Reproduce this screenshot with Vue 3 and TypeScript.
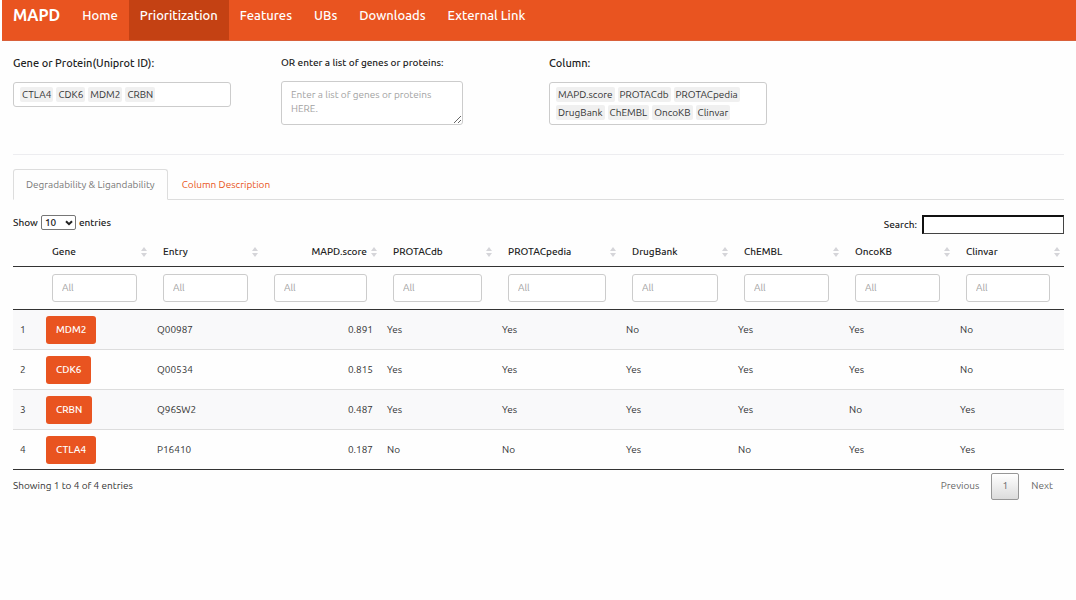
<script setup lang="ts">
import { computed, ref } from 'vue'

interface Column {
  key: string
  label: string
  width: number
  numeric?: boolean
}

type Row = Record<string, string>

const navItems: string[] = ['Home', 'Prioritization', 'Features', 'UBs', 'Downloads', 'External Link']
const activeNav = ref('Prioritization')

const selectedGenes = ref<string[]>(['CTLA4', 'CDK6', 'MDM2', 'CRBN'])
const selectedColumns = ref<string[]>([
  'MAPD.score', 'PROTACdb', 'PROTACpedia', 'DrugBank', 'ChEMBL', 'OncoKB', 'Clinvar',
])

const tabs: string[] = ['Degradability & Ligandability', 'Column Description']
const activeTab = ref(tabs[0])

const columns: Column[] = [
  { key: 'gene', label: 'Gene', width: 111 },
  { key: 'entry', label: 'Entry', width: 111 },
  { key: 'score', label: 'MAPD.score', width: 119, numeric: true },
  { key: 'protacdb', label: 'PROTACdb', width: 115 },
  { key: 'protacpedia', label: 'PROTACpedia', width: 124 },
  { key: 'drugbank', label: 'DrugBank', width: 112 },
  { key: 'chembl', label: 'ChEMBL', width: 111 },
  { key: 'oncokb', label: 'OncoKB', width: 111 },
  { key: 'clinvar', label: 'Clinvar', width: 110 },
]

const rows: Row[] = [
  ['MDM2', 'Q00987', '0.891', 'Yes', 'Yes', 'No', 'Yes', 'Yes', 'No'],
  ['CDK6', 'Q00534', '0.815', 'Yes', 'Yes', 'Yes', 'Yes', 'Yes', 'No'],
  ['CRBN', 'Q96SW2', '0.487', 'Yes', 'Yes', 'Yes', 'Yes', 'No', 'Yes'],
  ['CTLA4', 'P16410', '0.187', 'No', 'No', 'Yes', 'No', 'Yes', 'Yes'],
].map((values) => Object.fromEntries(columns.map((c, i) => [c.key, values[i]])))

const geneList = ref('')
const pageSize = ref('10')
const search = ref('')
const filters = ref<Record<string, string>>({})
const sortKey = ref('')
const sortAscending = ref(true)

function sortBy(key: string) {
  sortAscending.value = sortKey.value === key ? !sortAscending.value : true
  sortKey.value = key
}

const visibleRows = computed<Row[]>(() => {
  const term = search.value.toLowerCase()
  const found = rows.filter(
    (row) =>
      Object.values(row).some((v) => v.toLowerCase().includes(term)) &&
      columns.every((c) => row[c.key].toLowerCase().includes((filters.value[c.key] ?? '').toLowerCase())),
  )
  if (sortKey.value) {
    const direction = sortAscending.value ? 1 : -1
    found.sort((a, b) => a[sortKey.value].localeCompare(b[sortKey.value]) * direction)
  }
  return found
})
</script>

<template>
  <div class="page">
    <nav class="navbar">
      <a class="brand" href="#">MAPD</a>
      <a
        v-for="item in navItems"
        :key="item"
        href="#"
        class="nav-link"
        :class="{ active: item === activeNav }"
        @click.prevent="activeNav = item"
      >{{ item }}</a>
    </nav>

    <main class="content">
      <section class="controls">
        <div class="field">
          <label for="genes">Gene or Protein(Uniprot ID):</label>
          <div class="tokens">
            <span v-for="gene in selectedGenes" :key="gene" class="token">{{ gene }}</span>
            <input id="genes" class="token-input" type="text" />
          </div>
        </div>
        <div class="field list-field">
          <label for="gene-list">OR enter a list of genes or proteins:</label>
          <textarea id="gene-list" v-model="geneList" placeholder="Enter a list of genes or proteins HERE."></textarea>
        </div>
        <div class="field">
          <label for="columns">Column:</label>
          <div class="tokens">
            <span v-for="name in selectedColumns" :key="name" class="token">{{ name }}</span>
            <input id="columns" class="token-input" type="text" />
          </div>
        </div>
      </section>

      <hr class="divider" />

      <div class="tabs" role="tablist">
        <button
          v-for="tab in tabs"
          :key="tab"
          type="button"
          role="tab"
          class="tab"
          :class="{ active: tab === activeTab }"
          :aria-selected="tab === activeTab"
          @click="activeTab = tab"
        >{{ tab }}</button>
      </div>

      <div class="toolbar">
        <label class="length">
          Show
          <span class="select-wrap">
            <select v-model="pageSize">
              <option>10</option>
              <option>25</option>
              <option>50</option>
              <option>100</option>
            </select>
            <svg class="chevron" viewBox="0 0 8 6" aria-hidden="true"><path d="M1 1.2 4 4.2 7 1.2" /></svg>
          </span>
          entries
        </label>
        <label class="search">
          Search:
          <input v-model="search" type="search" />
        </label>
      </div>

      <table class="grid">
        <colgroup>
          <col class="index-col" />
          <col v-for="c in columns" :key="c.key" :style="{ width: c.width + 'px' }" />
        </colgroup>
        <thead>
          <tr class="heads">
            <th></th>
            <th v-for="c in columns" :key="c.key" scope="col">
              <button type="button" class="sort" :class="{ numeric: c.numeric }" @click="sortBy(c.key)">
                <span>{{ c.label }}</span>
                <svg viewBox="0 0 6 10" aria-hidden="true"><path d="M3 0 6 4H0zM0 6h6L3 10z" /></svg>
              </button>
            </th>
          </tr>
          <tr class="filters">
            <td></td>
            <td v-for="c in columns" :key="c.key">
              <input v-model="filters[c.key]" type="text" placeholder="All" :aria-label="c.label" />
            </td>
          </tr>
        </thead>
        <tbody>
          <tr v-for="(row, i) in visibleRows" :key="row.gene">
            <td>{{ i + 1 }}</td>
            <td v-for="c in columns" :key="c.key" :class="{ numeric: c.numeric }">
              <button v-if="c.key === 'gene'" type="button" class="gene">{{ row.gene }}</button>
              <template v-else>{{ row[c.key] }}</template>
            </td>
          </tr>
        </tbody>
      </table>

      <footer class="table-footer">
        <span>Showing 1 to {{ visibleRows.length }} of {{ rows.length }} entries</span>
        <div class="pager">
          <button type="button">Previous</button>
          <button type="button" class="current">1</button>
          <button type="button">Next</button>
        </div>
      </footer>
    </main>
  </div>
</template>

<style>
body {
  margin: 0;
  background: #fefefe;
}
</style>

<style scoped>
.page {
  font-family: Ubuntu, "Noto Sans", "Open Sans", sans-serif;
  font-size: 10px;
  line-height: 14px;
  color: #333;
}

.page *,
.page *::before {
  box-sizing: border-box;
}

button,
input,
select,
textarea {
  font: inherit;
  color: inherit;
  margin: 0;
}

button {
  background: none;
  border: 0;
  padding: 0;
  cursor: pointer;
}

.navbar {
  display: flex;
  height: 41px;
  margin-left: 2px;
  background: #e95420;
  border-bottom: 1px solid #d9603a;
}

.navbar a {
  color: #fff;
  text-decoration: none;
  line-height: 30px;
  font-size: 13px;
  font-weight: 500;
  padding: 0 11px;
}

.navbar .brand {
  font-size: 16px;
  font-weight: 700;
}

.navbar .nav-link.active {
  background: #c44113;
}

.content {
  padding: 15px 12px 0 13px;
}

.controls {
  display: grid;
  grid-template-columns: repeat(4, minmax(0, 1fr));
  gap: 21px;
  min-height: 70px;
}

.field {
  display: flex;
  flex-direction: column;
  align-items: flex-start;
  gap: 12px;
}

.field label {
  font-size: 11px;
  font-weight: 500;
  color: #222;
}

.list-field {
  gap: 11px;
}

.list-field label {
  font-size: 10px;
}

.tokens {
  display: flex;
  flex-wrap: wrap;
  gap: 3px;
  width: 100%;
  max-width: 218px;
  padding: 4px 6px;
  border: 1px solid #ccc;
  border-radius: 3px;
  background: #fff;
}

.token {
  padding: 0 2px;
  line-height: 15px;
  background: #f0f0f0;
  border-radius: 2px;
}

.token-input {
  flex: 1 1 4px;
  width: 4px;
  min-width: 0;
  height: 15px;
  padding: 0;
  border: 0;
  outline: 0;
  background: none;
}

textarea {
  width: 100%;
  max-width: 182px;
  height: 44px;
  padding: 6px 9px;
  border: 1px solid #ccc;
  border-radius: 3px;
  background: #fff;
  resize: both;
}

::placeholder {
  color: #a2a2a2;
  opacity: 1;
}

.divider {
  height: 1px;
  margin: 28px 0 14px;
  border: 0;
  background: #ededf0;
}

.tabs {
  display: flex;
  gap: 1px;
  border-bottom: 1px solid #ddd;
}

.tab {
  height: 31px;
  margin-bottom: -1px;
  padding: 0 12px;
  border: 1px solid transparent;
  border-radius: 3px 3px 0 0;
  color: #e95420;
}

.tab.active {
  color: #777;
  background: #fefefe;
  border-color: #ddd;
  border-bottom-color: #fefefe;
}

.toolbar {
  display: flex;
  justify-content: space-between;
  align-items: flex-start;
  padding-top: 15px;
  color: #222;
  font-weight: 500;
}

.length,
.search {
  display: flex;
  align-items: center;
  gap: 3px;
}

.search {
  gap: 5px;
}

.select-wrap {
  display: grid;
  align-items: center;
}

.select-wrap > * {
  grid-area: 1 / 1;
}

select {
  appearance: none;
  width: 35px;
  height: 15px;
  padding: 0 3px;
  line-height: 13px;
  border: 1px solid #767676;
  border-radius: 2px;
  background: #fff;
}

.chevron {
  justify-self: end;
  width: 8px;
  height: 6px;
  margin-right: 3px;
  fill: none;
  stroke: #222;
  stroke-width: 2;
  pointer-events: none;
}

.search input {
  width: 142px;
  height: 19px;
  padding: 0 3px;
  border: 1px solid #444;
  border-width: 2px 1px 1px 2px;
  border-color: #111 #444 #444 #111;
  border-radius: 0;
  background: #fff;
  appearance: none;
}

.grid {
  width: 100%;
  table-layout: fixed;
  border-collapse: collapse;
  border-bottom: 1px solid #333;
}

.index-col {
  width: 27px;
}

.grid th,
.grid td {
  padding: 0 6px;
  text-align: left;
}

.grid .heads th {
  height: 32px;
  padding: 5px 4px 0 12px;
  border-bottom: 1px solid #333;
}

.sort {
  display: flex;
  justify-content: space-between;
  align-items: center;
  width: 100%;
  font-weight: 500;
  color: #222;
}

.sort.numeric {
  justify-content: flex-end;
  gap: 4px;
}

.sort svg {
  width: 6px;
  height: 10px;
  fill: #d5d5d9;
}

.grid .filters td {
  height: 43px;
  padding: 0 14px 0 12px;
  border-bottom: 1px solid #333;
}

.filters input {
  display: block;
  width: 100%;
  height: 28px;
  padding: 0 9px;
  border: 1px solid #ccc;
  border-radius: 3px;
  background: #fff;
}

.grid tbody td {
  height: 40px;
  padding-top: 1px;
  border-top: 1px solid #ddd;
}

.grid tbody td:first-child {
  padding-left: 7px;
}

.grid tbody tr:first-child td {
  border-top-color: #333;
}

.grid tbody tr:nth-child(odd) {
  background: #f9f9fa;
}

.grid td.numeric {
  padding-right: 8px;
  text-align: right;
}

.gene {
  display: block;
  height: 28px;
  padding: 0 10px;
  border-radius: 3px;
  background: #e95420;
  color: #fff;
  font-weight: 500;
}

.table-footer {
  display: flex;
  justify-content: space-between;
  align-items: flex-start;
  padding-top: 3px;
}

.table-footer > span {
  padding-top: 6px;
}

.pager {
  display: flex;
  gap: 1px;
  color: #666;
}

.pager button {
  height: 27px;
  padding: 0 10px;
  border: 1px solid transparent;
  border-radius: 2px;
}

.pager .current {
  min-width: 28px;
  border-color: #979797;
  background: linear-gradient(#fff, #dcdcdc);
}
</style>
